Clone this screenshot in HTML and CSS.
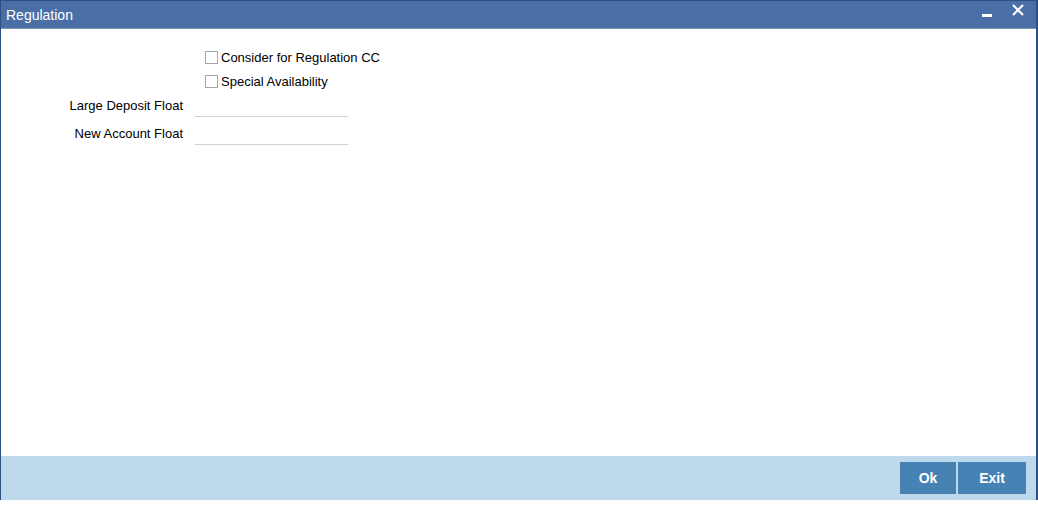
FILE: index.html
```html
<!DOCTYPE html>
<html lang="en">

<head>
  <meta charset="UTF-8" />
  <title>Regulation</title>
  <link rel="stylesheet" href="styles.css">
</head>

<body>
  <div class="window">

    <div class="titlebar">
      <span class="title">Regulation</span>
      <div class="win-controls">
        <svg class="ico-min" width="10" height="10" viewBox="0 0 10 10">
          <rect x="0" y="6" width="10" height="3" fill="#fff" />
        </svg>
        <svg class="ico-close" width="12" height="12" viewBox="0 0 12 12">
          <path d="M1 1 L11 11 M11 1 L1 11" stroke="#fff" stroke-width="2.2" />
        </svg>
      </div>
    </div>

    <div class="content">
      <div class="check-row">
        <span class="checkbox"></span>
        <label>Consider for Regulation CC</label>
      </div>
      <div class="check-row">
        <span class="checkbox"></span>
        <label>Special Availability</label>
      </div>
      <div class="field-row">
        <label class="field-label">Large Deposit Float</label>
        <input type="text" class="field-input">
      </div>
      <div class="field-row">
        <label class="field-label">New Account Float</label>
        <input type="text" class="field-input">
      </div>
    </div>

    <div class="footer">
      <button class="btn">Ok</button>
      <button class="btn btn-exit">Exit</button>
    </div>

  </div>
</body>

</html>
```

FILE: styles.css
```css
body {
  font-family: "Liberation Sans", Arial, sans-serif;
  font-size: 13px;
  margin: 0;
  background-color: #fff;
  color: #000;
}

.window {
  height: 499px;
  border-top: 1px solid #2c4f85;
  border-left: 1px solid #2c4f85;
  border-right: 2px solid #2c4f85;
  display: flex;
  flex-direction: column;
}

.titlebar {
  height: 27px;
  background-color: #4a6fa7;
  border-bottom: 1px solid #8197ad;
  display: flex;
  align-items: center;
  justify-content: space-between;
}

.title {
  color: #fff;
  font-size: 14px;
  padding-left: 5px;
}

.win-controls {
  display: flex;
  align-items: center;
  gap: 20px;
  padding-right: 12px;
}

.ico-min {
  margin-top: -4px;
}

.ico-close {
  margin-top: -9px;
}

.content {
  flex: 1;
  padding-top: 16px;
}

.check-row {
  height: 24px;
  display: flex;
  align-items: center;
  padding-left: 204px;
}

.checkbox {
  width: 11px;
  height: 11px;
  border: 1px solid #a8a8a8;
  background: #fff;
  margin-right: 3px;
  margin-top: 1px;
}

.field-row {
  height: 28px;
  display: flex;
  align-items: flex-start;
}

.field-label {
  width: 182px;
  text-align: right;
  line-height: 24px;
  margin-right: 12px;
  padding-top: 1px;
}

.field-input {
  width: 153px;
  height: 24px;
  box-sizing: border-box;
  border: none;
  border-bottom: 1px solid #d0d0d0;
  padding: 0 4px;
  font: inherit;
  outline: none;
}

.footer {
  height: 44px;
  background-color: #bfd9ec;
  display: flex;
  justify-content: flex-end;
  align-items: center;
  gap: 2px;
  padding-right: 10px;
}

.btn {
  width: 56px;
  height: 32px;
  border: none;
  background-color: #4682b4;
  color: #fff;
  font-family: inherit;
  font-size: 14px;
  font-weight: bold;
}

.btn-exit {
  width: 68px;
}
```
